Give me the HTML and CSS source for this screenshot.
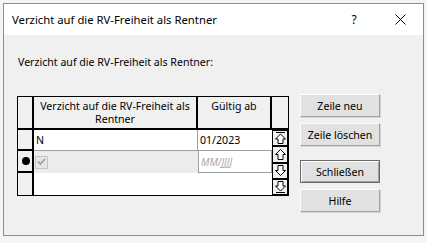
FILE: index.html
```html
<!DOCTYPE html>
<html lang="de">
<head>
    <meta charset="UTF-8">
    <title>Verzicht auf die RV-Freiheit als Rentner</title>
    <link rel="stylesheet" href="styles.css">
</head>
<body>
<div class="desk">
    <div class="window">
        <div class="titlebar">
            <span class="title">Verzicht auf die RV-Freiheit als Rentner</span>
            <span class="cap-btn">?</span>
            <span class="cap-btn">
                <svg width="11" height="11" viewBox="0 0 11 11"><path d="M0.5 0.5 L10.5 10.5 M10.5 0.5 L0.5 10.5" stroke="#000" stroke-width="1" fill="none"/></svg>
            </span>
        </div>
        <div class="content">
            <div class="label">Verzicht auf die RV-Freiheit als Rentner:</div>
            <div class="main">
                <div class="grid">
                    <div class="sel"></div>
                    <div class="hdr">Verzicht auf die RV-Freiheit als Rentner</div>
                    <div class="hdr">Gültig ab</div>
                    <div class="hdr hdr-last"></div>

                    <div class="sel"></div>
                    <div class="cell">N</div>
                    <div class="cell cell-date">01/2023</div>
                    <div class="scroll">
                        <div class="sbtn">
                            <svg width="11" height="12" viewBox="0 0 11 12"><path d="M1 0.5 H10 M5.5 2 L0.5 7 H3 V11.5 H8 V7 H10.5 Z" stroke="#000" fill="#fff"/></svg>
                        </div>
                        <div class="sbtn">
                            <svg width="11" height="11" viewBox="0 0 11 11"><path d="M5.5 0.5 L0.5 5.5 H3 V10.5 H8 V5.5 H10.5 Z" stroke="#000" fill="#fff"/></svg>
                        </div>
                        <div class="sbtn">
                            <svg width="11" height="11" viewBox="0 0 11 11"><path d="M5.5 10.5 L0.5 5.5 H3 V0.5 H8 V5.5 H10.5 Z" stroke="#000" fill="#fff"/></svg>
                        </div>
                        <div class="sbtn">
                            <svg width="11" height="12" viewBox="0 0 11 12"><path d="M1 11.5 H10 M5.5 10 L0.5 5 H3 V0.5 H8 V5 H10.5 Z" stroke="#000" fill="#fff"/></svg>
                        </div>
                    </div>

                    <div class="sel"><span class="dot"></span></div>
                    <div class="cell cell-cur"><span class="check">
                        <svg width="9" height="8" viewBox="0 0 9 8"><path d="M1 3.5 L3.5 6 L8 1" stroke="#9a9a9a" stroke-width="1.6" fill="none"/></svg>
                    </span></div>
                    <div class="cell cell-date cell-new">MM/JJJJ</div>

                    <div class="sel sel-last"></div>
                    <div class="cell cell-empty"></div>
                </div>
                <div class="buttons">
                    <button class="btn">Zeile neu</button>
                    <button class="btn">Zeile löschen</button>
                    <button class="btn btn-default">Schließen</button>
                    <button class="btn">Hilfe</button>
                </div>
            </div>
        </div>
    </div>
</div>
</body>
</html>
```

FILE: styles.css
```css
body {
    margin: 0;
    font-family: "Noto Sans", Arial, sans-serif;
    font-size: 10.6px;
    color: #000;
}

.desk {
    width: 427px;
    height: 243px;
    box-sizing: border-box;
    padding: 3px 0 0 3px;
    background: #f4f4f4;
    overflow: hidden;
}

.window {
    width: 421px;
    height: 233px;
    box-sizing: border-box;
    border: 1px solid #8c8c8c;
    background: #f0f0f0;
}

.titlebar {
    height: 31px;
    display: flex;
    align-items: center;
    background: #fff;
    padding-left: 8px;
    font-size: 11.3px;
}
.title {
    flex: 1;
}
.cap-btn {
    width: 46px;
    text-align: center;
    font-size: 12px;
    display: flex;
    justify-content: center;
    align-items: center;
}

.content {
    padding: 20px 0 0 14px;
}
.label {
    line-height: 14px;
}

.main {
    display: flex;
    align-items: flex-start;
    margin-top: 25px;
    margin-left: -1px;
}

.grid {
    display: grid;
    grid-template-columns: 16px 164px 74px 16px;
    grid-template-rows: 33px 21px 22px 22px;
    border: 1px solid #000;
    margin-top: 2px;
    background: #fff;
}

.sel {
    background: #f0f0f0;
    border-right: 2px solid #000;
    border-bottom: 2px solid #000;
    display: flex;
    align-items: center;
    justify-content: center;
}
.sel-last {
    border-bottom: none;
}
.dot {
    width: 8px;
    height: 8px;
    border-radius: 50%;
    background: #000;
    margin-left: 2px;
}

.hdr {
    background: #f0f0f0;
    border-right: 2px solid #000;
    border-bottom: 2px solid #000;
    text-align: center;
    line-height: 13px;
    padding: 3px 1px 0;
}
.hdr-last {
    border-right: none;
}

.cell {
    border-right: 1px solid #a0a0a0;
    border-bottom: 1px solid #a0a0a0;
    padding-left: 2px;
    display: flex;
    align-items: center;
}
.cell-date {
    border-right: none;
}
.cell-cur {
    background: #ececec;
    border-right: none;
    border-bottom: none;
    padding-left: 1px;
}
.cell-new {
    border-left: 1px solid #a0a0a0;
    border-right: 1px solid #a0a0a0;
    color: #a8a8a8;
    font-style: italic;
    font-size: 10px;
}
.cell-empty {
    grid-column: 2 / 4;
    border: none;
}

.check {
    width: 11px;
    height: 11px;
    border: 1px solid #c4c4c4;
    background: #e6e6e6;
    display: flex;
    align-items: center;
    justify-content: center;
}

.scroll {
    grid-column: 4;
    grid-row: 2 / 5;
    display: flex;
    flex-direction: column;
    border-left: 1px solid #000;
}
.sbtn {
    flex: 1;
    border: 1px solid #000;
    border-left: none;
    background: #f0f0f0;
    display: flex;
    align-items: center;
    justify-content: center;
}

.buttons {
    display: flex;
    flex-direction: column;
    margin-left: 11px;
}
.btn {
    width: 80px;
    height: 23px;
    margin-bottom: 6px;
    font-family: "Noto Sans", Arial, sans-serif;
    font-size: 10.6px;
    color: #000;
    background: #e1e1e1;
    border: 1px solid;
    border-color: #fdfdfd #a0a0a0 #a0a0a0 #fdfdfd;
    box-shadow: 1px 1px 0 #d4d4d4;
    padding: 0;
}
.btn:nth-child(2) {
    margin-bottom: 14px;
}
.btn-default {
    border: 1px solid #6a6a6a;
    box-shadow: inset 1px 1px 0 #fdfdfd, inset -1px -1px 0 #a0a0a0;
}
```
